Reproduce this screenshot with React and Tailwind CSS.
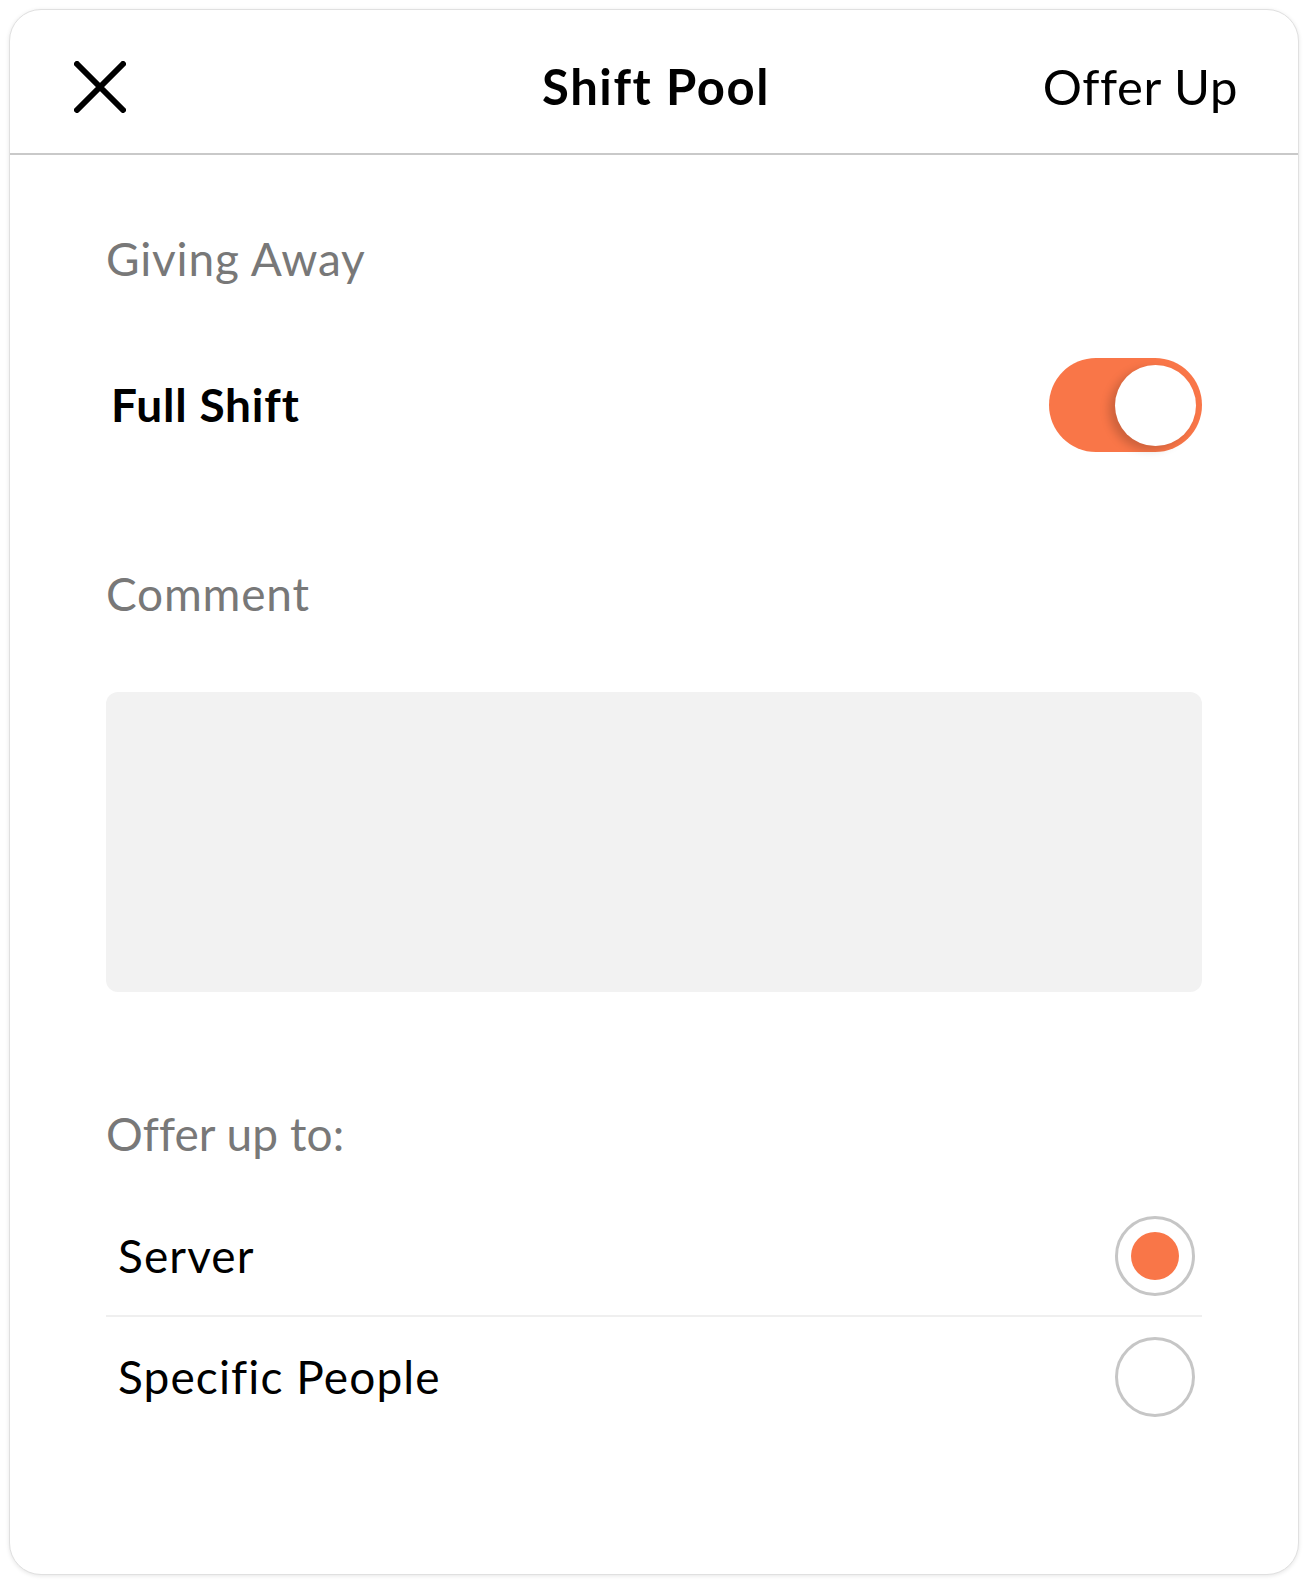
import React, { useState } from 'react';

const font = { fontFamily: 'Lato, "Open Sans", sans-serif' };

function CloseIcon() {
  return (
    <svg width="52" height="52" viewBox="0 0 52 52" fill="none">
      <path
        d="M3 3 L49 49 M49 3 L3 49"
        stroke="#000"
        strokeWidth="6"
        strokeLinecap="round"
      />
    </svg>
  );
}

function Toggle({ on, onChange }) {
  return (
    <button
      onClick={() => onChange(!on)}
      className={`relative h-[94px] w-[153px] rounded-full ${on ? 'bg-[#f97648]' : 'bg-[#e5e5e5]'}`}
    >
      <span
        className={`absolute top-[7px] h-[81px] w-[81px] rounded-full bg-white shadow-[-6px_4px_10px_rgba(0,0,0,0.18)] ${on ? 'right-[6px]' : 'left-[6px]'}`}
      />
    </button>
  );
}

function Radio({ checked }) {
  return (
    <span className="flex h-[80px] w-[80px] items-center justify-center rounded-full border-[3px] border-[#c6c6c6] bg-white">
      {checked && <span className="h-[48px] w-[48px] rounded-full bg-[#f97648]" />}
    </span>
  );
}

export default function App() {
  const [fullShift, setFullShift] = useState(true);
  const [target, setTarget] = useState('server');
  const options = [
    { key: 'server', label: 'Server' },
    { key: 'people', label: 'Specific People' },
  ];

  return (
    <div className="min-h-screen bg-white p-[9px]" style={font}>
      <div className="h-[1566px] overflow-hidden rounded-[32px] border border-[#e0e0e0] bg-white shadow-[0_1px_4px_rgba(0,0,0,0.10)]">
        <header className="grid h-[145px] grid-cols-[1fr_auto_1fr] items-center border-b-2 border-[#c9c9c9] pl-[64px] pr-[60px] pt-[10px]">
          <button className="justify-self-start">
            <CloseIcon />
          </button>
          <h1 className="text-[49px] font-bold leading-none tracking-[1.6px] text-black">Shift Pool</h1>
          <button className="justify-self-end text-[49px] leading-none tracking-[0.6px] text-black">Offer Up</button>
        </header>

        <div className="px-[96px] tracking-[0.8px]">
          <div className="mt-[81px] text-[46px] leading-none text-[#787878]">Giving Away</div>

          <div className="mt-[76px] flex h-[94px] items-center justify-between">
            <span className="pl-[5px] text-[46px] font-bold leading-none text-black">Full Shift</span>
            <Toggle on={fullShift} onChange={setFullShift} />
          </div>

          <div className="mt-[119px] text-[46px] leading-none text-[#787878]">Comment</div>

          <textarea className="mt-[75px] block h-[300px] w-full resize-none rounded-[12px] bg-[#f2f2f2] p-6 text-[40px] outline-none" />

          <div className="mt-[119px] text-[46px] leading-none tracking-[0.1px] text-[#787878]">Offer up to:</div>

          <ul className="mt-[40px]">
            {options.map((o, i) => (
              <li
                key={o.key}
                onClick={() => setTarget(o.key)}
                className={`flex h-[120px] cursor-pointer items-center justify-between pl-[12px] pr-[7px] ${i === 0 ? 'border-b-2 border-[#efefef]' : ''}`}
              >
                <span className="text-[46px] leading-none tracking-[1.1px] text-black">{o.label}</span>
                <Radio checked={target === o.key} />
              </li>
            ))}
          </ul>
        </div>
      </div>
    </div>
  );
}
